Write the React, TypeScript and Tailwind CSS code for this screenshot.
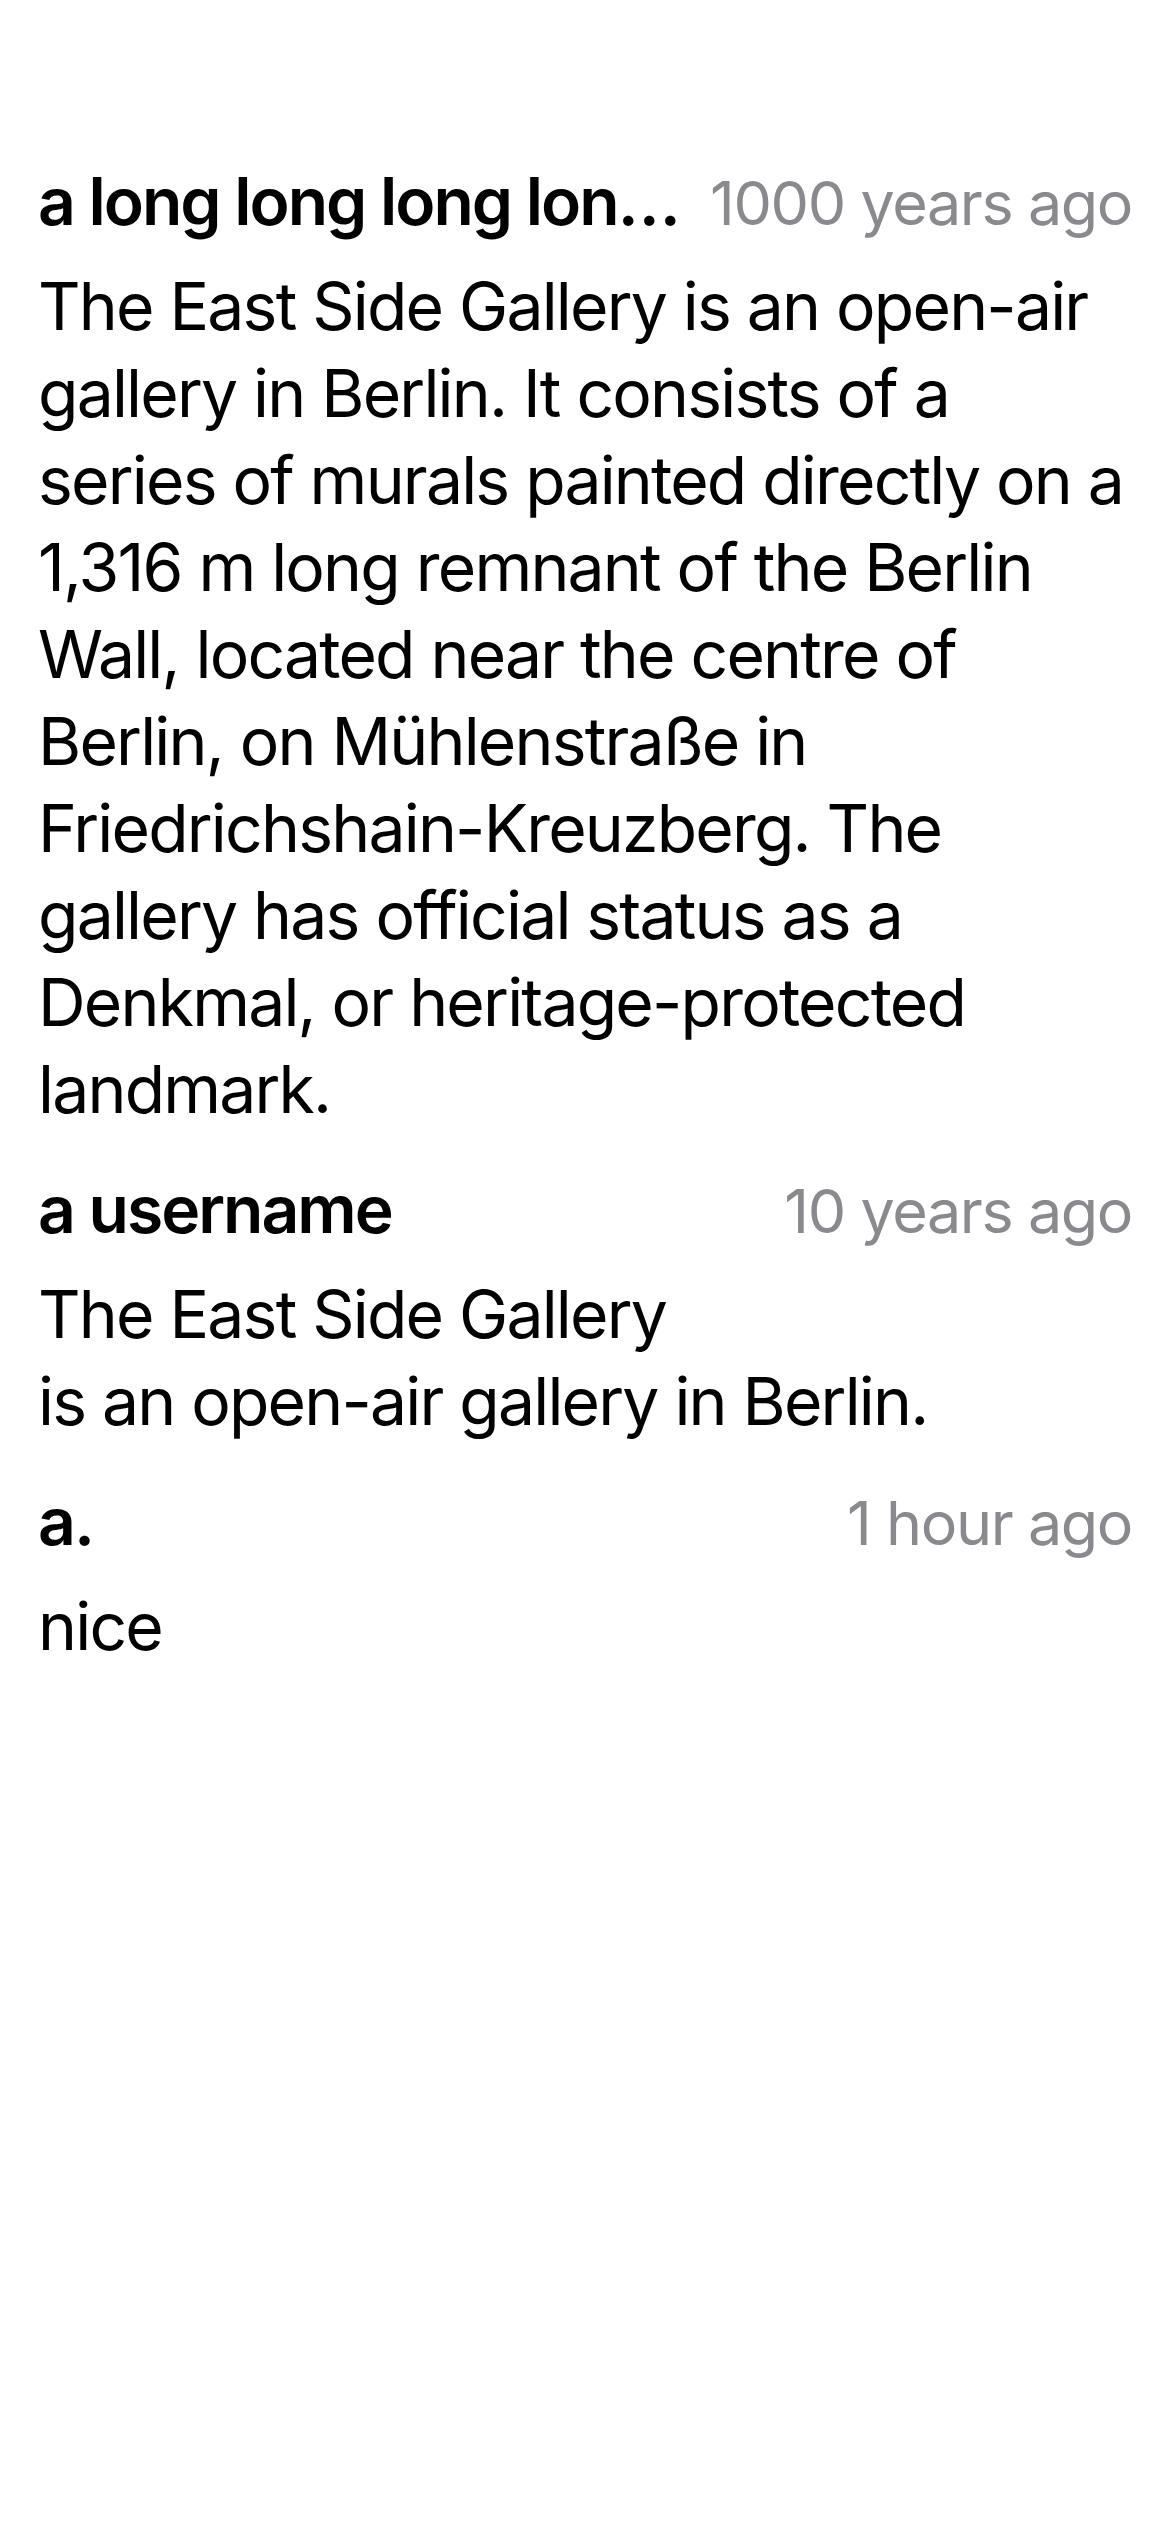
import React from 'react';

interface Comment {
  id: number;
  author: string;
  time: string;
  body: string;
}

const COMMENTS: Comment[] = [
  {
    id: 1,
    author: 'a long long long long long long username',
    time: '1000 years ago',
    body:
      'The East Side Gallery is an open-air gallery in Berlin. It consists of a series of murals painted directly on a 1,316 m long remnant of the Berlin Wall, located near the centre of Berlin, on Mühlenstraße in Friedrichshain-Kreuzberg. The gallery has official status as a Denkmal, or heritage-protected landmark.',
  },
  {
    id: 2,
    author: 'a username',
    time: '10 years ago',
    body: 'The East Side Gallery\nis an open-air gallery in Berlin.',
  },
  { id: 3, author: 'a.', time: '1 hour ago', body: 'nice' },
];

function CommentRow({ comment }: { comment: Comment }) {
  return (
    <div className="flex flex-col gap-[18px]">
      <div className="flex items-baseline justify-between gap-[18px]">
        <span className="min-w-0 truncate font-semibold tracking-[-2px] text-black">{comment.author}</span>
        <span className="flex-shrink-0 text-[61px] leading-none tracking-[-1.4px] text-[#8a8a8e]">
          {comment.time}
        </span>
      </div>
      <p className="whitespace-pre-line text-black">{comment.body}</p>
    </div>
  );
}

export default function App() {
  return (
    <div
      className="min-h-[2532px] w-[1170px] bg-white px-[38px] pt-[158px] text-[66px] leading-[87px] tracking-[-1.8px]"
      style={{ fontFamily: 'Inter, "Noto Sans", sans-serif' }}
    >
      <div className="flex flex-col gap-[33px]">
        {COMMENTS.map(c => (
          <CommentRow key={c.id} comment={c} />
        ))}
      </div>
    </div>
  );
}
